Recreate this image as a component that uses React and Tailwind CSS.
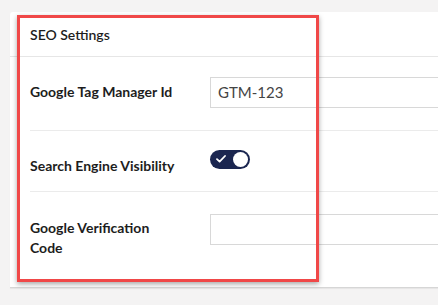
import React from 'react';

function Row({ label, children, className = '' }) {
  return (
    <div className={`flex items-center border-b border-[#ebebeb] ${className}`}>
      <div className="w-[180px] shrink-0 pr-[28px] text-[14px] font-bold leading-[20px] text-[#1d1d1d]">{label}</div>
      <div className="min-w-0 flex-1">{children}</div>
    </div>
  );
}

export default function App() {
  return (
    <div className="relative h-[305px] w-[438px] overflow-hidden bg-[#f4f3f3] pt-[12px] pl-[10px] font-['Lato','Liberation_Sans',sans-serif]">
      {/* Card */}
      <div className="h-[276px] w-[460px] rounded-tl-[3px] border-b border-[#d6d6d6] bg-white shadow-[0_1px_1px_rgba(0,0,0,0.06)]">
        <div className="flex h-[45px] items-center border-b border-[#e6e6e6] pl-[20px] text-[14px] font-semibold text-[#1d1d1d]">
          SEO Settings
        </div>
        <div className="pl-[20px]">
          <Row label="Google Tag Manager Id" className="h-[74px] pb-[3px]">
            <input
              readOnly
              value="GTM-123"
              className="block h-[31px] w-full border border-[#d8d8d8] bg-white px-[7px] text-[15px] text-[#444] outline-none"
            />
          </Row>
          <Row label="Search Engine Visibility" className="h-[61px] pt-[10px]">
            <div className="relative -mt-[14px] flex h-[19px] w-[40px] items-center rounded-full bg-[#1b2650]">
              <svg width="10" height="8" viewBox="0 0 10 8" className="absolute left-[6px] top-[5px]">
                <path d="M1 4.2 L3.6 6.6 L9 1" fill="none" stroke="#fff" strokeWidth="1.8" strokeLinecap="round" strokeLinejoin="round" />
              </svg>
              <div className="absolute right-[2px] top-[2px] h-[15px] w-[15px] rounded-full bg-white" />
            </div>
          </Row>
          <div className="flex pt-[22px]">
            <div className="w-[180px] shrink-0 pr-[28px] pt-[4px] text-[14px] font-bold leading-[20px] text-[#1d1d1d]">
              Google Verification Code
            </div>
            <div className="min-w-0 flex-1">
              <input
                readOnly
                value=""
                className="block h-[31px] w-full border border-[#d8d8d8] bg-white px-[7px] text-[15px] text-[#444] outline-none"
              />
            </div>
          </div>
        </div>
      </div>

      {/* Highlight annotation */}
      <div className="pointer-events-none absolute left-[17px] top-[15px] h-[267px] w-[302px] border-[3px] border-[#f04848] shadow-[0_2px_5px_rgba(0,0,0,0.35)]" />
    </div>
  );
}
